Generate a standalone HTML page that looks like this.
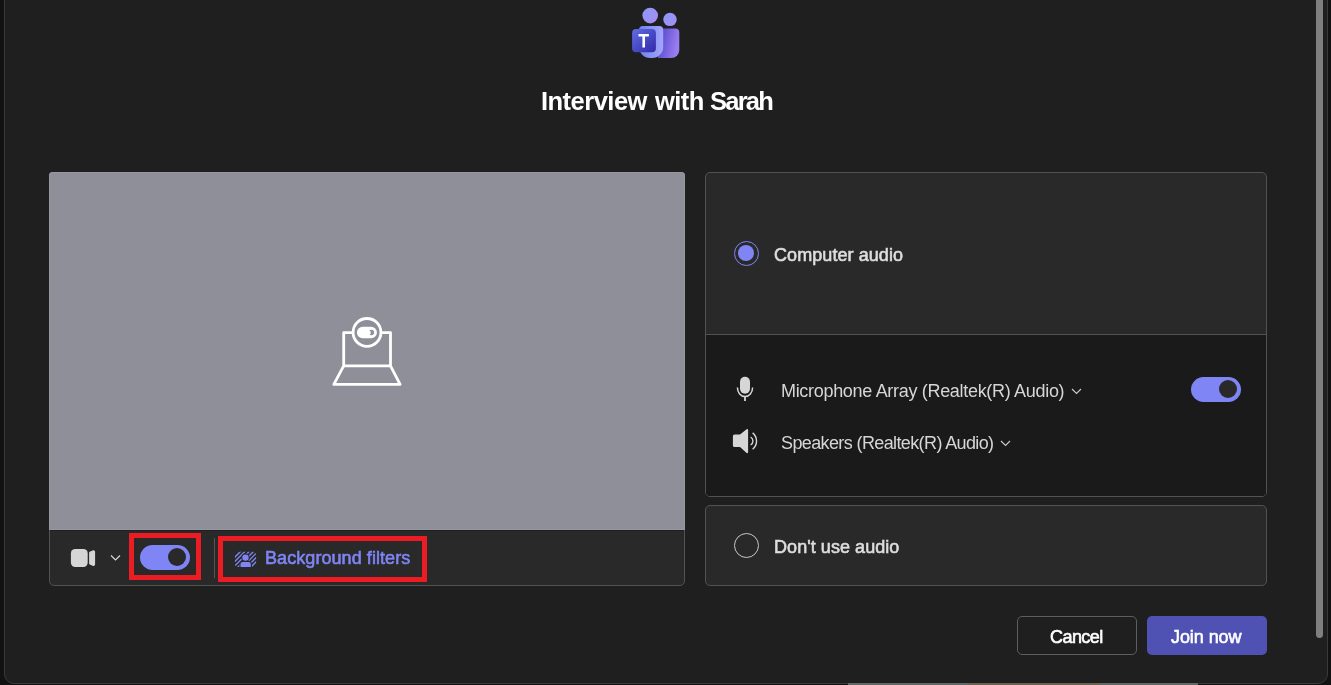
<!DOCTYPE html>
<html><head><meta charset="utf-8">
<style>
*{margin:0;padding:0;box-sizing:border-box}
html,body{width:1331px;height:685px;overflow:hidden;background:#121212;font-family:"Liberation Sans",sans-serif}
.a{position:absolute}
.t{position:absolute;white-space:nowrap;will-change:transform}
#dlg{position:absolute;left:4px;top:-12px;width:1324px;height:696px;background:#1f1f1f;border:1px solid #3a3a3a;border-radius:10px}
#sb{position:absolute;left:1316px;top:-10px;width:7px;height:648px;background:#7f7f7f;border-radius:4px}
#lcard{position:absolute;left:49px;top:172px;width:636px;height:414px;background:#292929;border:1px solid #525252;border-radius:5px}
#video{position:absolute;left:49px;top:172px;width:636px;height:358px;background:#8f8f99;border-radius:4px 4px 0 0;box-shadow:inset 0 0 0 1px #9797a2}
#vline{position:absolute;left:50px;top:530px;width:634px;height:1px;background:#1f1f1f}
.red{position:absolute;border:5px solid #ec1c24}
.card{position:absolute;left:705px;width:562px;border:1px solid #525252;border-radius:5px;background:#292929;overflow:hidden}
.lbl{color:#dedede;font-size:18px;-webkit-text-stroke:0.6px #dedede}
.dev{color:#d6d6d6;font-size:18px}
.tog{position:absolute;width:50px;height:25px;border-radius:13px;background:#7f85f5}
.tog i{position:absolute;right:4px;top:3px;width:18px;height:18px;border-radius:50%;background:#292929}
.btn{position:absolute;top:616px;height:39px;width:120px;border-radius:5px}
</style></head>
<body>
<div id="dlg"></div>
<div class="a" style="left:848px;top:683px;width:350px;height:2px;background:#5f6a66"></div>
<div class="a" style="left:968px;top:683px;width:132px;height:2px;background:#6a6352"></div>
<div id="sb"></div>

<!-- logo -->
<svg class="a" style="left:620px;top:0px" width="70" height="65" viewBox="0 0 70 65">
  <defs>
    <linearGradient id="g1" x1="0" y1="0" x2="1" y2="1"><stop offset="0" stop-color="#8a9af8"/><stop offset="1" stop-color="#a88cf4"/></linearGradient>
    <linearGradient id="g2" x1="0" y1="0" x2="1" y2="0"><stop offset="0" stop-color="#6f80ee"/><stop offset="1" stop-color="#a3a6fa"/></linearGradient>
    <linearGradient id="g3" x1="0" y1="0" x2="1" y2="0.3"><stop offset="0" stop-color="#4c42c4"/><stop offset="1" stop-color="#9a7ef2"/></linearGradient>
    <linearGradient id="g4" x1="0" y1="0" x2="1" y2="1"><stop offset="0" stop-color="#5f6ee6"/><stop offset="1" stop-color="#3328a6"/></linearGradient>
  </defs>
  <circle cx="30.2" cy="15.6" r="7.8" fill="url(#g1)"/>
  <circle cx="50" cy="19.4" r="6.7" fill="url(#g1)"/>
  <path d="M38 28.5 H55.3 a4 4 0 0 1 4 4 V50 a8 8 0 0 1 -8 8 H38 Z" fill="url(#g3)"/>
  <path d="M22 26 H39.2 a4 4 0 0 1 4 4 V47 a11 11 0 0 1 -11 11 H30 a11 11 0 0 1 -11 -11 V30 a4 4 0 0 1 3 -4Z" fill="url(#g2)"/>
  <rect x="12.1" y="28.9" width="23.8" height="23.3" rx="4" fill="url(#g4)"/>
  <path d="M18.5 34.1 H28.9 V36.6 H25 V47.4 H22.4 V36.6 H18.5Z" fill="#fff"/>
</svg>

<div class="t" style="left:541.3px;top:87px;font-size:25.5px;font-weight:bold;letter-spacing:-0.52px;color:#fff">Interview</div>
<div class="t" style="left:654.5px;top:87px;font-size:25.5px;font-weight:bold;letter-spacing:-0.59px;color:#fff">with</div>
<div class="t" style="left:710px;top:87px;font-size:25.5px;font-weight:bold;letter-spacing:-1.75px;color:#fff">Sarah</div>

<div id="lcard"></div>
<div id="video"></div>
<div id="vline"></div>
<!-- camera off icon -->
<svg class="a" style="left:300px;top:300px" width="140" height="100" viewBox="0 0 140 100">
  <g fill="none" stroke="#fff" stroke-width="2.8" stroke-linejoin="round">
    <path d="M52.5 32.6 H43.7 V65.8 H90.5 V32.6 H81.5"/>
    <path d="M43.7 65.8 L33.8 84.4 H100.1 L90.5 65.8"/>
    <circle cx="67" cy="32.4" r="13.9"/>
  </g>
  <rect x="56.9" y="26.8" width="20" height="11.4" rx="5.7" fill="#fff"/>
  <circle cx="71.3" cy="32.5" r="2.8" fill="#8f8f99"/>
  <circle cx="68.1" cy="32.5" r="2.6" fill="#fff"/>
</svg>

<!-- toolbar -->
<svg class="a" style="left:70px;top:548px" width="26" height="20" viewBox="0 0 26 20">
  <rect x="0.9" y="1" width="16.8" height="18" rx="4.2" fill="#d6d6d6"/>
  <path d="M19.1 5 a1.5 1.5 0 0 1 0.6 -1.2 L22.6 2.5 a1.7 1.7 0 0 1 2.5 1.5 V16.2 a1.7 1.7 0 0 1 -2.5 1.5 L19.7 16.4 a1.5 1.5 0 0 1 -0.6 -1.2 Z" fill="#d6d6d6"/>
</svg>
<svg class="a" style="left:110px;top:554px" width="11" height="8" viewBox="0 0 11 8">
  <path d="M1 1.5 L5.5 6 L10 1.5" fill="none" stroke="#d6d6d6" stroke-width="1.2"/>
</svg>
<div class="red" style="left:129px;top:533px;width:72px;height:47px"></div>
<div class="tog" style="left:140px;top:545px"><i></i></div>
<div class="a" style="left:214px;top:538px;width:1px;height:40px;background:#555"></div>
<div class="red" style="left:218px;top:536px;width:209px;height:46px"></div>
<svg class="a" style="left:232px;top:548px" width="28" height="22" viewBox="0 0 28 22">
  <defs>
    <clipPath id="bfc"><rect x="2.9" y="3.7" width="21.2" height="15.2" rx="3"/></clipPath>
    <mask id="bfm"><rect width="28" height="22" fill="#fff"/><circle cx="13.5" cy="9.6" r="4.3" fill="#000"/><rect x="7.4" y="12.9" width="12.5" height="9" rx="3" fill="#000"/></mask>
  </defs>
  <g clip-path="url(#bfc)"><g mask="url(#bfm)" stroke="#7f85f5" stroke-width="1.35"><line x1="0" y1="12" x2="12" y2="0"/><line x1="0" y1="16.3" x2="16.3" y2="0"/><line x1="0" y1="20.7" x2="20.7" y2="0"/><line x1="0" y1="25" x2="25" y2="0"/><line x1="0" y1="29.4" x2="29.4" y2="0"/><line x1="0" y1="33.7" x2="33.7" y2="0"/><line x1="0" y1="38" x2="38" y2="0"/></g></g>
  <circle cx="13.5" cy="9.6" r="3.2" fill="#7f85f5"/>
  <path d="M8.5 18.9 V16 a2 2 0 0 1 2 -2 H16.8 a2 2 0 0 1 2 2 V18.9Z" fill="#7f85f5"/>
</svg>
<div class="t" style="left:265px;top:548px;font-size:18px;letter-spacing:0.07px;color:#7f85f5;-webkit-text-stroke:0.6px #7f85f5">Background filters</div>

<!-- right cards -->
<div class="card" style="top:172px;height:325px">
  <div class="a" style="left:0;top:161px;width:560px;height:162px;background:#1a1a1a;border-top:1px solid #525252"></div>
</div>
<div class="card" style="top:505px;height:81px"></div>

<!-- radio 1 -->
<div class="a" style="left:734px;top:241px;width:25px;height:25px;border-radius:50%;border:1px solid #7f85f5"></div>
<div class="a" style="left:738.3px;top:245.3px;width:16px;height:16px;border-radius:50%;background:#7f85f5"></div>
<div class="t lbl" style="left:774px;top:245px;letter-spacing:0.07px">Computer audio</div>

<!-- mic -->
<svg class="a" style="left:733px;top:376px" width="24" height="26" viewBox="0 0 24 26">
  <rect x="7" y="0.8" width="10" height="17" rx="5" fill="#d6d6d6"/>
  <path d="M4.4 11.6 A7.6 9 0 0 0 19.6 11.6" fill="none" stroke="#d6d6d6" stroke-width="1.5"/>
  <path d="M12 20.5 V25" stroke="#d6d6d6" stroke-width="1.8"/>
</svg>
<div class="t dev" style="left:781px;top:381px;letter-spacing:-0.31px">Microphone Array (Realtek(R) Audio)</div>
<svg class="a" style="left:1071px;top:387px" width="11" height="9" viewBox="0 0 11 9"><path d="M1 2 L5.5 6.5 L10 2" fill="none" stroke="#c8c8c8" stroke-width="1.2"/></svg>
<div class="tog" style="left:1191px;top:377px"><i></i></div>

<!-- speaker -->
<svg class="a" style="left:732px;top:428px" width="27" height="27" viewBox="0 0 27 27">
  <path d="M0.9 8.2 a1.6 1.6 0 0 1 1.6 -1.6 H8 L14.6 1.3 a1 1 0 0 1 1.5 0.8 V24.1 a1 1 0 0 1 -1.5 0.8 L8 19 H2.5 a1.6 1.6 0 0 1 -1.6 -1.6Z" fill="#d6d6d6"/>
  <path d="M18.6 9 A4.6 4.6 0 0 1 18.6 17" fill="none" stroke="#d6d6d6" stroke-width="1.4"/>
  <path d="M20.6 4.9 A10.5 10.5 0 0 1 20.6 21.3" fill="none" stroke="#d6d6d6" stroke-width="1.4"/>
</svg>
<div class="t dev" style="left:781px;top:433px;letter-spacing:-0.615px">Speakers (Realtek(R) Audio)</div>
<svg class="a" style="left:1000px;top:439px" width="11" height="9" viewBox="0 0 11 9"><path d="M1 2 L5.5 6.5 L10 2" fill="none" stroke="#c8c8c8" stroke-width="1.2"/></svg>

<!-- radio 2 -->
<div class="a" style="left:734px;top:533px;width:25px;height:25px;border-radius:50%;border:1px solid #c8c8c8"></div>
<div class="t lbl" style="left:774px;top:537px;letter-spacing:0.06px">Don't use audio</div>

<!-- buttons -->
<div class="btn" style="left:1017px;border:1px solid #5e5e5e;background:#1f1f1f"></div>
<div class="t" style="left:1050px;top:627px;font-size:18px;letter-spacing:-0.56px;color:#fff;-webkit-text-stroke:0.6px #fff">Cancel</div>
<div class="btn" style="left:1147px;background:#4f52b2"></div>
<div class="t" style="left:1171px;top:627px;font-size:18px;letter-spacing:-0.07px;color:#fff;-webkit-text-stroke:0.6px #fff">Join now</div>
</body></html>
